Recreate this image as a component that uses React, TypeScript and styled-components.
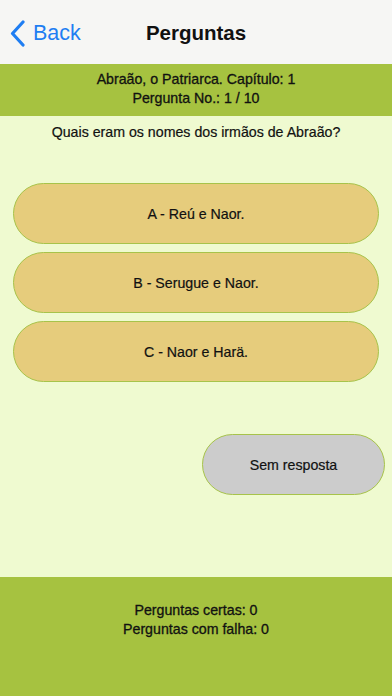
import styled, { createGlobalStyle } from "styled-components";

const GlobalStyle = createGlobalStyle`
  html, body {
    margin: 0;
    padding: 0;
    background: #effad0;
  }
  body {
    font-family: "Liberation Sans", Arial, sans-serif;
    color: #111;
  }
`;

const Screen = styled.div`
  width: 392px;
  height: 696px;
  display: flex;
  flex-direction: column;
  background: #effad0;
  overflow: hidden;
`;

const NavBar = styled.div`
  height: 64px;
  flex-shrink: 0;
  background: #f6f6f4;
  display: grid;
  grid-template-columns: 1fr auto 1fr;
  align-items: center;
  padding-top: 2px;
  box-sizing: border-box;
`;

const BackButton = styled.div`
  display: flex;
  align-items: center;
  gap: 8px;
  padding-left: 10px;
  color: #1f7ef2;
  font-size: 21.5px;
`;

const Title = styled.div`
  font-size: 20.5px;
  font-weight: bold;
  color: #111;
`;

const Band = styled.div`
  background: #a6c240;
  flex-shrink: 0;
  display: flex;
  flex-direction: column;
  align-items: center;
  justify-content: center;
  text-align: center;
  font-size: 14.2px;
  line-height: 19px;
  -webkit-text-stroke: 0.3px #111;
`;

const InfoBand = styled(Band)`
  height: 52px;
  padding-bottom: 2px;
  box-sizing: border-box;
`;

const Footer = styled(Band)`
  height: 119px;
  margin-top: auto;
  justify-content: flex-start;
  padding-top: 24px;
  box-sizing: border-box;
`;

const Question = styled.div`
  text-align: center;
  font-size: 14.2px;
  padding-top: 8px;
  height: 67px;
  box-sizing: border-box;
  -webkit-text-stroke: 0.2px #111;
`;

const Answers = styled.div`
  display: flex;
  flex-direction: column;
  gap: 8px;
  padding: 0 13px 0 13px;
`;

const Pill = styled.div<{ $tone: "answer" | "skip" }>`
  height: 61px;
  border-radius: 31px;
  border: 1px solid #a7c34a;
  box-sizing: border-box;
  display: flex;
  align-items: center;
  justify-content: center;
  font-size: 14.2px;
  -webkit-text-stroke: 0.2px #111;
  background: ${(p) => (p.$tone === "answer" ? "#e6cc7c" : "#cccccc")};
`;

const SkipRow = styled.div`
  display: flex;
  justify-content: flex-end;
  padding: 52px 7px 0 0;
`;

const SkipButton = styled(Pill)`
  width: 183px;
`;

const answers = ["A - Reú e Naor.", "B - Serugue e Naor.", "C - Naor e Harä."];

export default function App() {
  return (
    <>
      <GlobalStyle />
      <Screen>
        <NavBar>
          <BackButton>
            <svg width="15" height="27" viewBox="0 0 15 27" fill="none">
              <path
                d="M13 2 L2.5 13.5 L13 25"
                stroke="#1f7ef2"
                strokeWidth="3.2"
                strokeLinecap="round"
                strokeLinejoin="round"
              />
            </svg>
            <span>Back</span>
          </BackButton>
          <Title>Perguntas</Title>
          <div />
        </NavBar>
        <InfoBand>
          <div>Abraão, o Patriarca. Capítulo: 1</div>
          <div>Pergunta No.: 1 / 10</div>
        </InfoBand>
        <Question>Quais eram os nomes dos irmãos de Abraão?</Question>
        <Answers>
          {answers.map((a) => (
            <Pill key={a} $tone="answer">
              {a}
            </Pill>
          ))}
        </Answers>
        <SkipRow>
          <SkipButton $tone="skip">Sem resposta</SkipButton>
        </SkipRow>
        <Footer>
          <div>Perguntas certas: 0</div>
          <div>Perguntas com falha: 0</div>
        </Footer>
      </Screen>
    </>
  );
}
